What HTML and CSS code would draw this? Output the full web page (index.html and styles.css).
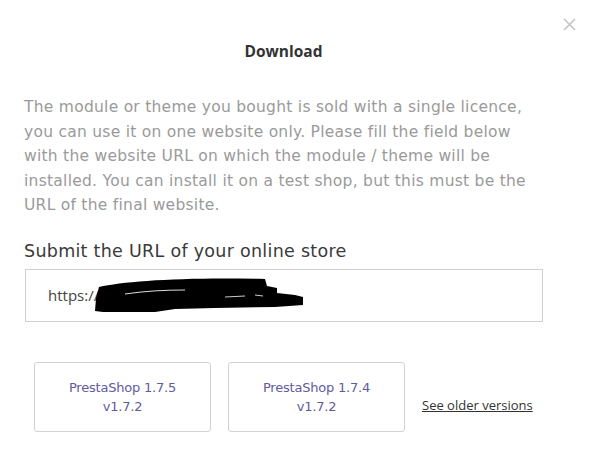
FILE: index.html
```html
<!DOCTYPE html>
<html>
<head>
<meta charset="utf-8">
<link rel="stylesheet" href="styles.css">
</head>
<body>
<div class="modal">
  <button class="close" aria-label="Close">
    <svg width="13" height="13" viewBox="0 0 13 13"><path d="M1 1L12 12M12 1L1 12" stroke="#c4c4c4" stroke-width="1.6" fill="none"/></svg>
  </button>
  <h1 class="title">Download</h1>
  <p class="intro">The module or theme you bought is sold with a single licence, you can use it on one website only. Please fill the field below with the website URL on which the module / theme will be installed. You can install it on a test shop, but this must be the URL of the final website.</p>
  <label class="label">Submit the URL of your online store</label>
  <div class="field">
    <span class="url">https://</span>
    <svg class="redact" width="212" height="36" viewBox="0 0 212 36"><path d="M4 9 C30 3 90 -1 170 1 L172 8 L182 10 L182 15 L200 17 L208 19 L208 27 L180 29 L120 30 L80 31 L60 34 L8 34 L0 33 L1 20 Z" fill="#000"/><path d="M30 16 C50 13 70 12 90 12" stroke="#ddd" stroke-width="1" fill="none"/><path d="M130 19 L150 18 M160 17 L168 18" stroke="#ccc" stroke-width="1" fill="none"/></svg>
  </div>
  <div class="actions">
    <a class="version" href="#"><span>PrestaShop 1.7.5</span><span>v1.7.2</span></a>
    <a class="version" href="#"><span>PrestaShop 1.7.4</span><span>v1.7.2</span></a>
    <a class="older" href="#">See older versions</a>
  </div>
</div>
</body>
</html>
```
FILE: styles.css
```css
html, body {
  margin: 0;
  padding: 0;
  background: #fff;
}
.modal {
  position: relative;
  width: 591px;
  height: 459px;
  box-sizing: border-box;
  padding: 40px 24px 0 24px;
  font-family: "DejaVu Sans", sans-serif;
}
.close {
  position: absolute;
  top: 18px;
  right: 15px;
  border: 0;
  background: none;
  padding: 0;
  width: 13px;
  height: 13px;
  cursor: pointer;
}
.close svg { display: block; }
.title {
  margin: 0;
  padding-right: 24px;
  text-align: center;
  font-family: "Open Sans", sans-serif;
  font-weight: 700;
  font-size: 15.5px;
  line-height: 22px;
  color: #333;
}
.intro {
  margin: 33px 0 0 0;
  width: 515px;
  font-size: 15.5px;
  line-height: 24.5px;
  color: #9a9a9a;
  letter-spacing: 0.26px;
}
.label {
  display: block;
  margin-top: 22px;
  font-size: 17.5px;
  line-height: 22px;
  color: #3a3a3a;
  letter-spacing: 0.28px;
}
.field {
  margin: 7px 24px 0 1px;
  height: 53px;
  box-sizing: border-box;
  border: 1px solid #d0d0d0;
  display: flex;
  align-items: center;
  padding-left: 22px;
}
.url {
  font-family: "Open Sans", sans-serif;
  font-size: 15px;
  color: #444;
}
.redact {
  display: block;
  margin-left: -4px;
  margin-top: 1px;
}
.actions {
  margin: 40px 0 0 10px;
  display: flex;
  align-items: center;
  gap: 17px;
}
.version {
  width: 177px;
  height: 70px;
  box-sizing: border-box;
  border: 1px solid #d2d2d6;
  border-radius: 3px;
  display: flex;
  flex-direction: column;
  align-items: center;
  justify-content: center;
  text-decoration: none;
  color: #5f5b9e;
  font-size: 13px;
  line-height: 19px;
  letter-spacing: -0.2px;
}
.older {
  margin-top: 17px;
  font-family: "Open Sans", sans-serif;
  font-size: 13px;
  color: #333;
  text-decoration: underline;
}
```
